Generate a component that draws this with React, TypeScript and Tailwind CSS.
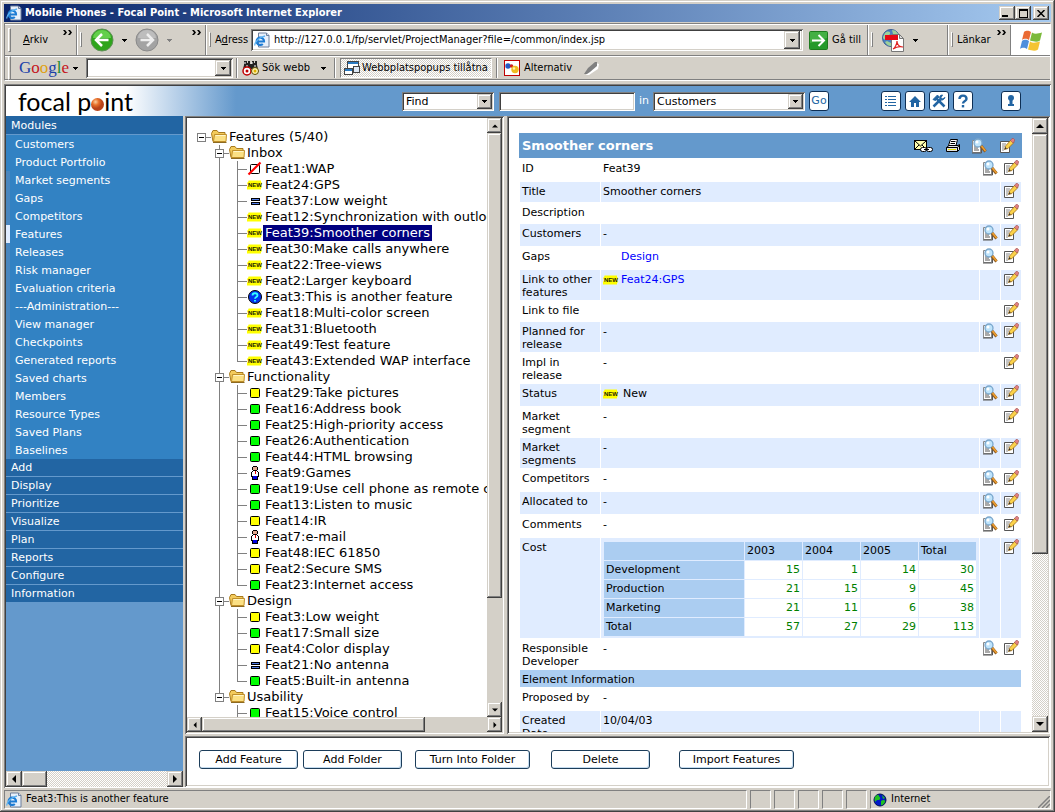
import React, { useState } from 'react';

const RAISED =
  'bg-[#d4d0c8] shadow-[inset_-1px_-1px_0_#404040,inset_1px_1px_0_#d4d0c8,inset_-2px_-2px_0_#808080,inset_2px_2px_0_#ffffff]';
const SUNKEN =
  'shadow-[inset_1px_1px_0_#808080,inset_-1px_-1px_0_#ffffff,inset_2px_2px_0_#404040,inset_-2px_-2px_0_#d4d0c8]';
const CHECKER = 'bg-[repeating-conic-gradient(#ffffff_0_25%,#d4d0c8_0_50%)] bg-[length:2px_2px]';
const TAHOMA = "font-['DejaVu_Sans_Condensed','DejaVu_Sans',sans-serif]";
const VERDANA = "font-['DejaVu_Sans',Verdana,sans-serif]";

type Kind = 'new' | 'yellow' | 'green' | 'equal' | 'person' | 'question' | 'rejected';
type Leaf = { kind: Kind; label: string };

const TREE: { name: string; items: Leaf[] }[] = [
  {
    name: 'Inbox',
    items: [
      { kind: 'rejected', label: 'Feat1:WAP' },
      { kind: 'new', label: 'Feat24:GPS' },
      { kind: 'equal', label: 'Feat37:Low weight' },
      { kind: 'new', label: 'Feat12:Synchronization with outlook' },
      { kind: 'new', label: 'Feat39:Smoother corners' },
      { kind: 'new', label: 'Feat30:Make calls anywhere' },
      { kind: 'new', label: 'Feat22:Tree-views' },
      { kind: 'new', label: 'Feat2:Larger keyboard' },
      { kind: 'question', label: 'Feat3:This is another feature' },
      { kind: 'new', label: 'Feat18:Multi-color screen' },
      { kind: 'new', label: 'Feat31:Bluetooth' },
      { kind: 'new', label: 'Feat49:Test feature' },
      { kind: 'new', label: 'Feat43:Extended WAP interface' },
    ],
  },
  {
    name: 'Functionality',
    items: [
      { kind: 'yellow', label: 'Feat29:Take pictures' },
      { kind: 'green', label: 'Feat16:Address book' },
      { kind: 'green', label: 'Feat25:High-priority access' },
      { kind: 'green', label: 'Feat26:Authentication' },
      { kind: 'green', label: 'Feat44:HTML browsing' },
      { kind: 'person', label: 'Feat9:Games' },
      { kind: 'green', label: 'Feat19:Use cell phone as remote control' },
      { kind: 'green', label: 'Feat13:Listen to music' },
      { kind: 'yellow', label: 'Feat14:IR' },
      { kind: 'person', label: 'Feat7:e-mail' },
      { kind: 'yellow', label: 'Feat48:IEC 61850' },
      { kind: 'yellow', label: 'Feat2:Secure SMS' },
      { kind: 'green', label: 'Feat23:Internet access' },
    ],
  },
  {
    name: 'Design',
    items: [
      { kind: 'yellow', label: 'Feat3:Low weight' },
      { kind: 'green', label: 'Feat17:Small size' },
      { kind: 'yellow', label: 'Feat4:Color display' },
      { kind: 'equal', label: 'Feat21:No antenna' },
      { kind: 'green', label: 'Feat5:Built-in antenna' },
    ],
  },
  {
    name: 'Usability',
    items: [
      { kind: 'green', label: 'Feat15:Voice control' },
    ],
  },
];

const MODULES = [
  'Customers', 'Product Portfolio', 'Market segments', 'Gaps', 'Competitors', 'Features', 'Releases',
  'Risk manager', 'Evaluation criteria', '---Administration---', 'View manager', 'Checkpoints',
  'Generated reports', 'Saved charts', 'Members', 'Resource Types', 'Saved Plans', 'Baselines',
];
const SECTIONS = ['Add', 'Display', 'Prioritize', 'Visualize', 'Plan', 'Reports', 'Configure', 'Information'];

const COST_YEARS = ['2003', '2004', '2005', 'Total'];
const COSTS: [string, number[]][] = [
  ['Development', [15, 1, 14, 30]],
  ['Production', [21, 15, 9, 45]],
  ['Marketing', [21, 11, 6, 38]],
  ['Total', [57, 27, 29, 113]],
];

/* ---------- icons ---------- */

const IeIcon = () => (
  <svg width="16" height="16" viewBox="0 0 16 16" className="shrink-0">
    <path d="M4.500 1h8l2.500 2.500V15H4.500z" fill="#e8f0fb" stroke="#6d7f9c" />
    <path d="M12.500 1v2.500H15" fill="#cfdcf0" stroke="#6d7f9c" />
    <path d="M3 9.500h7a3.700 3.700 0 1 0-1.200 2.500" fill="none" stroke="#1c7bd4" strokeWidth="2.200" />
    <path d="M1 13.500C0 11 5 5 11 4" fill="none" stroke="#5cb2f0" strokeWidth="1.300" />
  </svg>
);

const NavArrow = ({ back }: { back?: boolean }) => (
  <svg width="24" height="24" viewBox="0 0 24 24" className="shrink-0">
    <circle cx="12" cy="12" r="11" fill={back ? '#2fa51c' : '#a3a3a3'} stroke={back ? '#5f8f57' : '#8a8a8a'} />
    <path d="M3 10a9 8 0 0 1 18 0z" fill={back ? '#63cf4b' : '#bdbdbd'} />
    {back ? (
      <path d="M18.500 12H7m5-6-6 6 6 6" fill="none" stroke="#fff" strokeWidth="2.500" />
    ) : (
      <path d="M5.500 12H17m-5-6 6 6-6 6" fill="none" stroke="#eee" strokeWidth="2.500" />
    )}
  </svg>
);

const Caret = ({ className = 'text-black' }: { className?: string }) => (
  <svg width="5" height="3" viewBox="0 0 5 3" shapeRendering="crispEdges" className={`shrink-0 ${className}`}>
    <path d="M0 0h5v1H4v1H3v1H2V2H1V1H0z" fill="currentColor" />
  </svg>
);

const Chevrons = () => (
  <svg width="9" height="5" viewBox="0 0 9 5" className="shrink-0">
    <path d="M0 0h2l2 2.500L2 5H0l2-2.500zM5 0h2l2 2.500L7 5H5l2-2.500z" fill="#000" />
  </svg>
);

const GoIcon = () => (
  <svg width="19" height="19" viewBox="0 0 19 19" className="shrink-0">
    <rect x=".5" y=".5" width="18" height="18" rx="1" fill="#259a2b" stroke="#1e7b1e" />
    <path d="M1 1h17v6L1 12z" fill="#5abf55" opacity=".6" />
    <path d="M3 9.500h11M9.500 4l5.500 5.500L9.500 15" fill="none" stroke="#fff" strokeWidth="2" />
  </svg>
);

const PdfIcon = () => (
  <svg width="24" height="24" viewBox="0 0 24 24" className="shrink-0">
    <circle cx="10" cy="10" r="8.500" fill="#4a7fc1" stroke="#3b5f92" />
    <path d="M4 5c3-3 6-1 5 1s-3 1-4 4-3 1-3-1zM11 2c4 0 6 3 7 6l-3 1-3-3zM6 13l4 2v3c-3 0-5-2-6-4z" fill="#9ed09a" />
    <path d="M10.500 6.500h8l4 4v13h-12z" fill="#fff" stroke="#777" />
    <path d="M18.500 6.500v4h4z" fill="#ddd" stroke="#777" />
    <rect x="4" y="7" width="13" height="5" fill="#e50914" />
    <path d="M12 21c2-1 4-5 4-8 0 4 3 6 6 6-3-1-7 0-10 2z" fill="none" stroke="#e02020" strokeWidth="1.200" />
  </svg>
);

const WindowsLogo = () => (
  <svg width="24" height="23" viewBox="0 0 24 23">
    <path d="M5 3c3-2 5-1 7 0l-2 8c-2-1-4-2-7 0z" fill="#ea6a33" />
    <path d="M13 3.500c3 2 6 1 10 0l-2 8c-3 2-6 1-10 0z" fill="#7cba3c" />
    <path d="M3 12c3-2 5-1 7 0l-2 8c-2-1-4-2-7 0z" fill="#4f8fdc" />
    <path d="M11 12.500c3 2 6 1 10 0l-2 8c-3 2-6 1-10 0z" fill="#f5c433" />
  </svg>
);

const Binoculars = () => (
  <svg width="17" height="16" viewBox="0 0 17 16" className="shrink-0">
    <path d="M2 1h3v2h1V1h2v3h2V1h2v2h1V1h2v4l1 4H1l1-4z" fill="#222" />
    <path d="M3 2v2M10 2v2M13 5v2M5 5v2" stroke="#fff" />
    <circle cx="5" cy="11" r="4" fill="#fff" stroke="#c00000" strokeWidth="1.500" />
    <circle cx="5" cy="11" r="1.500" fill="#c00000" />
    <circle cx="13" cy="11" r="3.500" fill="#fff6b0" stroke="#5c4a00" />
    <circle cx="13" cy="11" r="1.500" fill="#e0b000" />
  </svg>
);

const PopupIcon = () => (
  <svg width="16" height="16" viewBox="0 0 16 16" shapeRendering="crispEdges" className="shrink-0">
    <rect x="3.500" y="1.500" width="11" height="7" fill="#fff" stroke="#444" />
    <rect x="4" y="2" width="10" height="2" fill="#2a7ac0" />
    <rect x=".5" y="8.500" width="8" height="6" fill="#fff" stroke="#444" />
    <rect x="1" y="9" width="7" height="2" fill="#2a7ac0" />
    <rect x="9.500" y="6.500" width="6" height="6" fill="#dfe9f5" stroke="#444" />
  </svg>
);

const OptionsIcon = () => (
  <svg width="16" height="16" viewBox="0 0 16 16" className="shrink-0">
    <rect x=".5" y=".5" width="15" height="15" fill="#fff" stroke="#c00000" />
    <circle cx="4" cy="6" r="2.700" fill="#2459c4" />
    <circle cx="7.500" cy="6" r="1.800" fill="#d02020" />
    <circle cx="11" cy="9.500" r="3.700" fill="#f0bc20" />
    <circle cx="10" cy="8.500" r="1.200" fill="#fff3b0" />
  </svg>
);

const Highlighter = () => (
  <svg width="15" height="14" viewBox="0 0 15 14" className="shrink-0">
    <path d="M1 13h3l9-6 1-5-3-1L5 7z" fill="#fff" transform="translate(1 1)" />
    <path d="M0 13 4 7l7-6h2v4L6 11l-3 2z" fill="#808080" />
  </svg>
);

const FolderIcon = () => (
  <svg width="16" height="16" viewBox="0 0 16 16" className="shrink-0">
    <path d="M.500 4.500 2 1.500h4L7.500 3.500H14v9H2z" fill="#f3cb5c" stroke="#a87a1e" />
    <path d="M3.500 5.500h12l-.5 7H2.500z" fill="#fbe084" stroke="#c08f2a" />
    <path d="M4.500 6.500h10" stroke="#fff6c8" />
    <path d="M2 13.500h13.500" stroke="#8c6a22" />
  </svg>
);

const NewIcon = () => (
  <svg width="16" height="10" viewBox="0 0 16 10" className="shrink-0">
    <path
      d="M0 3 1 2 2 0l1 1 1-1 1 1 1-1 1 1 1-1 1 1 1-1 1 1 1-1 1 1 1-1 0 2 1 1-1 2 1 2-1 1v2l-1-1-1 1-1-1-1 1-1-1-1 1-1-1-1 1-1-1-1 1-1-1-1 1-1-1-1 1-1-2L0 7l1-2z"
      fill="#ffff00"
    />
    <text x="8" y="7" textAnchor="middle" fontSize="6" fontWeight="bold" fill="#222200" fontFamily="Liberation Sans, sans-serif">
      NEW
    </text>
  </svg>
);

const KindIcon = ({ kind }: { kind: Kind }) => {
  if (kind === 'new') return <NewIcon />;
  return (
    <svg width="16" height="16" viewBox="0 0 16 16" className="shrink-0">
      {(kind === 'yellow' || kind === 'green') && (
        <rect x="3.500" y="3.500" width="9" height="9" rx="1" fill={kind === 'green' ? '#00ff00' : '#ffff00'} stroke="#000" />
      )}
      {kind === 'equal' && (
        <g shapeRendering="crispEdges">
          <path d="M4 5h9v3H4zM4 9h9v3H4z" fill="#000" />
          <path d="M5 6h7v1H5zM5 10h7v1H5z" fill="#4f7be8" />
        </g>
      )}
      {kind === 'rejected' && (
        <>
          <rect x="3.500" y="3.500" width="9" height="9" rx="1" fill="#fff" stroke="#000" />
          <path d="M1.500 13.500 13.500 1.500" stroke="#ff0000" strokeWidth="2.200" />
        </>
      )}
      {kind === 'question' && (
        <>
          <circle cx="8" cy="8" r="6.500" fill="#0033ee" stroke="#000" />
          <path d="M5.500 6.500c0-3 5-3 5 0 0 1.500-2.500 1.500-2.500 3.200M8 11v1.500" fill="none" stroke="#33ffff" strokeWidth="1.800" />
        </>
      )}
      {kind === 'person' && (
        <g shapeRendering="crispEdges">
          <path d="M6 1h4v1h1v3h-1v1h1v1h1v5h-1v3H5v-3H4V7h1V6h1V5H5V2h1z" fill="#000" />
          <path d="M6 2h4v3H6z" fill="#e0a890" />
          <path d="M6 6h4v1h1v4H5V7h1z" fill="#fff" />
          <path d="M8 6h1v3H8z" fill="#e00000" />
          <path d="M6 11h4v3H6z" fill="#0000e0" />
        </g>
      )}
    </svg>
  );
};

const LookupIcon = () => (
  <svg width="16" height="16" viewBox="0 0 16 16">
    <path d="M1.500 2.500h8v12h-8z" fill="#fff" stroke="#8a8a8a" />
    <path d="M1 15h9.500V10M3 8h2M3 10h4M3 12h5" fill="none" stroke="#555" />
    <circle cx="7" cy="5" r="4" fill="#bfe4fb" stroke="#7aa7cc" strokeWidth="1.300" />
    <circle cx="6" cy="4" r="1.500" fill="#fff" />
    <path d="m10 8 4.500 5.500" stroke="#8d5a20" strokeWidth="3" />
    <path d="m10.500 8 4 5" stroke="#f0a030" strokeWidth="1.600" />
  </svg>
);

const EditIcon = () => (
  <svg width="16" height="16" viewBox="0 0 16 16">
    <path d="M1.500 3.500h9v11h-9z" fill="#fff" stroke="#555" />
    <path d="M3 6h4M3 8h3M3 10h2M3 12h2" stroke="#888" />
    <path d="M5.500 11.500 6.500 8l5.500-6 3 2.500L9 10.500z" fill="#fbd24a" stroke="#9c6a1c" strokeWidth=".8" />
    <path d="m5.500 11.500.8-2.500 1.500 1.500z" fill="#333" />
    <path d="m11.500 2.500 1.500-2h1.500l1 1v1.500l-1.500 2z" fill="#e08080" stroke="#a05050" strokeWidth=".6" />
  </svg>
);

const MailIcon = () => (
  <svg width="20" height="16" viewBox="0 0 20 16">
    <rect x="1.500" y="2.500" width="12" height="9" fill="#ffffb0" stroke="#000" />
    <path d="m2 3 5.500 5L13 3M2 11l4-4M13 11 9 7" fill="none" stroke="#000" />
    <rect x="7.500" y="9.500" width="6" height="4" rx="2" fill="#fff" stroke="#000" />
    <rect x="13.500" y="9.500" width="6" height="4" rx="2" fill="#fff" stroke="#000" />
    <path d="M11 11.500h5" stroke="#000" />
  </svg>
);

const PrinterIcon = () => (
  <svg width="16" height="16" viewBox="0 0 16 16">
    <path d="M5.500 1.500h7l-1.500 6H3.500z" fill="#fff" stroke="#000" />
    <path d="M6 3.500h4.500M5.500 5.500H10" stroke="#000" />
    <path d="M1.500 9.500 4 7.500h9l1.500-1v5l-2 2h-11z" fill="#e4e4e4" stroke="#000" />
    <path d="M1.500 9.500h11l2-2.500M12.500 9.500v4" fill="none" stroke="#000" />
    <path d="M3 11.500h8" stroke="#e8e000" />
  </svg>
);

const GlobeIcon = () => (
  <svg width="14" height="14" viewBox="0 0 14 14" className="shrink-0">
    <circle cx="7" cy="7" r="6" fill="#0018c8" stroke="#001050" />
    <path d="M2 4c2-3 4-2 4-1s2 1 1 3-3 0-4 2-2-2-1-4zM8 8c2-2 5-1 4 1s-3 4-4 3zM9 2l3 3-2 1z" fill="#20c020" />
  </svg>
);

/* ---------- window widgets ---------- */

type Dir = 'up' | 'down' | 'left' | 'right';
const ARROWS: Record<Dir, string> = {
  up: 'M4 2 8 6H0z',
  down: 'M0 2h8L4 6z',
  left: 'M2 4 6 0v8z',
  right: 'M6 4 2 0v8z',
};

const ScrollButton = ({ dir, small }: { dir: Dir; small?: boolean }) => (
  <button
    aria-label={`Scroll ${dir}`}
    className={`flex shrink-0 items-center justify-center ${small ? 'h-[15px] w-[15px]' : 'h-4 w-4'} ${RAISED}`}
  >
    <svg width={small ? 6 : 8} height={small ? 6 : 8} viewBox="0 0 8 8">
      <path d={ARROWS[dir]} fill="#000" />
    </svg>
  </button>
);

const Grip = () => <span className="h-6 w-[3px] shrink-0 border border-t-white border-l-white border-r-[#808080] border-b-[#808080]" />;
const Divider = () => <span className="w-0.5 shrink-0 self-stretch border-r border-l border-r-white border-l-[#808080]" />;

type PickerProps = { label: string; options: string[]; className: string };
const Picker = ({ label, options, className }: PickerProps) => (
  <span className={`grid h-[19px] items-center bg-white p-0.5 ${SUNKEN} ${className}`}>
    <select aria-label={label} className="col-start-1 row-start-1 w-full appearance-none bg-transparent pl-0.5 text-[11px] leading-[15px] outline-none">
      {options.map((o) => (
        <option key={o}>{o}</option>
      ))}
    </select>
    <span className={`pointer-events-none col-start-1 row-start-1 flex h-[15px] w-[15px] items-center justify-center justify-self-end ${RAISED}`}>
      <Caret />
    </span>
  </span>
);

const HeaderButton = ({ label, children }: { label: string; children: React.ReactNode }) => (
  <button aria-label={label} className="flex h-5 w-5 items-center justify-center rounded-[3px] border border-[#0d2f55] bg-white text-[11px] text-[#2265a3]">
    {children}
  </button>
);

/* ---------- browser chrome ---------- */

const TitleBar = () => (
  <div className={`flex h-[18px] shrink-0 items-center gap-[3px] bg-linear-to-r from-[#0a246a] to-[#a6caf0] px-0.5 text-[11px] font-bold text-white ${TAHOMA}`}>
    <IeIcon />
    <span className="grow whitespace-nowrap">Mobile Phones - Focal Point - Microsoft Internet Explorer</span>
    <span className="flex">
      <button aria-label="Minimize" className={`flex h-3.5 w-4 items-end justify-center pb-[3px] ${RAISED}`}>
        <span className="mr-1 h-0.5 w-1.5 bg-black" />
      </button>
      <button aria-label="Maximize" className={`flex h-3.5 w-4 items-center justify-center ${RAISED}`}>
        <span className="h-[9px] w-[9px] border border-t-2 border-black" />
      </button>
      <button aria-label="Close" className={`ml-0.5 flex h-3.5 w-4 items-center justify-center ${RAISED}`}>
        <svg width="8" height="7" viewBox="0 0 8 7">
          <path d="m.5 0 7 7m0-7-7 7" stroke="#000" strokeWidth="1.500" />
        </svg>
      </button>
    </span>
  </div>
);

const AddressRow = () => (
  <div className="flex h-8 items-center border-t border-b border-t-white border-b-[#808080] pl-[3px]">
    <Grip />
    <button className="ml-3 w-10 text-left">
      <u>A</u>rkiv
    </button>
    <span className="mr-1 mb-4"><Chevrons /></span>
    <Divider />
    <span className="ml-0.5"><Grip /></span>
    <button aria-label="Back" className="ml-2"><NavArrow back /></button>
    <span className="ml-2"><Caret /></span>
    <button aria-label="Forward" className="ml-2"><NavArrow /></button>
    <span className="ml-2"><Caret className="text-[#808080]" /></span>
    <span className="mr-1 mb-4 ml-5"><Chevrons /></span>
    <Divider />
    <span className="ml-0.5"><Grip /></span>
    <label htmlFor="address" className="ml-1 w-9">
      A<u>d</u>ress
    </label>
    <div className={`flex h-[22px] min-w-0 grow items-center gap-1 bg-white px-[3px] ${SUNKEN}`}>
      <IeIcon />
      <input id="address" className="min-w-0 grow outline-none" defaultValue="http://127.0.0.1/fp/servlet/ProjectManager?file=/common/index.jsp" />
      <button aria-label="Show addresses" className={`flex h-[18px] w-4 items-center justify-center ${RAISED}`}>
        <Caret />
      </button>
    </div>
    <button className="ml-1.5 flex w-[58px] items-center gap-1 whitespace-nowrap">
      <GoIcon />
      Gå till
    </button>
    <Divider />
    <span className="ml-0.5"><Grip /></span>
    <button aria-label="Adobe PDF" className="ml-2 flex w-[66px] items-center gap-2">
      <PdfIcon />
      <Caret />
    </button>
    <Divider />
    <span className="ml-0.5"><Grip /></span>
    <button className="ml-1 w-10 text-left">Länkar</button>
    <span className="mr-1 mb-4"><Chevrons /></span>
    <span className="flex w-10 items-center justify-center self-stretch border-l border-[#808080] bg-white">
      <WindowsLogo />
    </span>
  </div>
);

const GoogleRow = () => (
  <div className="flex h-6 items-center border-t border-b border-t-white border-b-[#808080] pl-[3px]">
    <Grip />
    <button className="ml-2 flex items-center gap-1 font-['Liberation_Serif',serif] text-[17px] leading-5">
      <span>
        <span className="text-[#1a3fa8]">G</span>
        <span className="text-[#c4141c]">o</span>
        <span className="text-[#e0a010]">o</span>
        <span className="text-[#1a3fa8]">g</span>
        <span className="text-[#1d8a2c]">l</span>
        <span className="text-[#c4141c]">e</span>
      </span>
      <Caret />
    </button>
    <div className={`ml-2 flex h-5 w-[147px] items-center bg-white p-0.5 ${SUNKEN}`}>
      <input aria-label="Google search" className="min-w-0 grow outline-none" />
      <button aria-label="Search history" className={`flex h-4 w-4 items-center justify-center ${RAISED}`}>
        <Caret />
      </button>
    </div>
    <span className="ml-[3px] flex h-5"><Divider /></span>
    <button className="ml-1 flex w-[84px] items-center gap-[3px] whitespace-nowrap">
      <Binoculars />
      <span className="grow text-left">Sök webb</span>
      <Caret />
    </button>
    <span className="mr-1 ml-2 flex h-5"><Divider /></span>
    <button className={`flex h-5 items-center gap-0.5 border border-t-[#808080] border-l-[#808080] border-r-white border-b-white px-[3px] whitespace-nowrap ${CHECKER}`}>
      <PopupIcon />
      Webbplatspopups tillåtna
    </button>
    <span className="mr-1.5 ml-1 flex h-5"><Divider /></span>
    <button className="flex items-center gap-1">
      <OptionsIcon />
      Alternativ
    </button>
    <button aria-label="Highlight" className="ml-3"><Highlighter /></button>
  </div>
);

const StatusBar = () => (
  <div className={`mt-0.5 flex h-[19px] shrink-0 items-stretch gap-[3px] text-[11px] ${TAHOMA}`}>
    <span className="flex grow items-center gap-1 border border-t-[#808080] border-l-[#808080] border-r-white border-b-white pl-px">
      <IeIcon />
      Feat3:This is another feature
    </span>
    {[0, 1, 2, 3, 4].map((i) => (
      <span key={i} className="w-[21px] border border-t-[#808080] border-l-[#808080] border-r-white border-b-white" />
    ))}
    <span className="flex w-[181px] items-center gap-1 border border-t-[#808080] border-l-[#808080] border-r-white border-b-white pl-0.5">
      <GlobeIcon />
      <span className="grow">Internet</span>
      <svg width="12" height="12" viewBox="0 0 12 12" className="self-end">
        <path d="M0 12 12 0M4 12l8-8M8 12l4-4" stroke="#808080" strokeWidth="1.500" />
      </svg>
    </span>
  </div>
);

/* ---------- application ---------- */

const AppHeader = () => (
  <header className="flex h-[30px] shrink-0 items-center bg-linear-to-r from-white from-[120px] to-[#6499cc] to-[230px]">
    <h1 className="flex w-[396px] items-baseline pl-3 font-['Lato',sans-serif] text-[25px] leading-7 text-black">
      focal p
      <svg width="13" height="13" viewBox="0 0 13 13">
        <defs>
          <radialGradient id="ball" cx="35%" cy="30%">
            <stop offset="0" stopColor="#fbd0a0" />
            <stop offset="0.500" stopColor="#e8702a" />
            <stop offset="1" stopColor="#b8431a" />
          </radialGradient>
        </defs>
        <circle cx="6.500" cy="6.500" r="6.500" fill="url(#ball)" />
      </svg>
      int
    </h1>
    <div className="flex items-center">
      <Picker label="Action" options={['Find']} className="w-[92px]" />
      <input aria-label="Search text" className={`ml-[5px] h-[19px] w-[136px] bg-white px-1 text-[11px] outline-none ${SUNKEN}`} />
      <span className="w-[18px] text-center text-[11px] text-white">in</span>
      <Picker label="Module" options={['Customers']} className="w-[152px]" />
      <span className="ml-1">
        <HeaderButton label="Go">Go</HeaderButton>
      </span>
    </div>
    <div className="ml-auto flex gap-1 pr-[29px]">
      <HeaderButton label="List">
        <svg width="12" height="12" viewBox="0 0 12 12" shapeRendering="crispEdges">
          <path d="M0 1.500h2m1 0h8M0 4.500h2m1 0h8M0 7.500h2m1 0h8M0 10.500h2m1 0h8" stroke="#2265a3" />
        </svg>
      </HeaderButton>
      <HeaderButton label="Home">
        <svg width="12" height="12" viewBox="0 0 12 12">
          <path d="M6 1 0 7h2v5h3V8h2v4h3V7h2z" fill="#2265a3" />
        </svg>
      </HeaderButton>
      <HeaderButton label="Tools">
        <svg width="14" height="14" viewBox="0 0 14 14" fill="none" stroke="#2265a3">
          <path d="m1.500 12.500 7-7" strokeWidth="2.500" />
          <path d="M13 3.500 10.500 5 9 3.500 10.500 1C8 1 7 3 8 5s4 1 5-1.500z" fill="#2265a3" />
          <path d="m5 5 7.500 7.500" strokeWidth="2.500" />
          <path d="M1 5.500 5.500 1 7 3 3.500 6.500z" fill="#2265a3" />
        </svg>
      </HeaderButton>
      <HeaderButton label="Help">
        <svg width="12" height="14" viewBox="0 0 12 14">
          <path d="M2.500 5c0-4.500 7-4.500 7 0C9.500 7 6 7 6 9.500" fill="none" stroke="#2265a3" strokeWidth="2.400" />
          <path d="M4.800 11h2.400v2.400H4.800z" fill="#2265a3" />
        </svg>
      </HeaderButton>
      <span className="ml-6">
        <HeaderButton label="Log in">
          <svg width="10" height="12" viewBox="0 0 10 12">
            <path d="M5 0a3 3 0 0 1 3 3c0 1.500-1 2-1.500 2.800V9H8v2H2V9h1.500V5.800C3 5 2 4.500 2 3a3 3 0 0 1 3-3z" fill="#2265a3" />
          </svg>
        </HeaderButton>
      </span>
    </div>
  </header>
);

const Sidebar = () => (
  <nav className="flex w-[177px] shrink-0 flex-col bg-[#6499cc] text-[11px] text-white">
    <div className="flex h-[19px] items-center border-b border-[#6499cc] bg-[#2265a3] pt-0.5 pl-[5px]">Modules</div>
    <ul>
      {MODULES.map((name, i) => (
        <li key={name} className="flex h-[18px] bg-[#3282c3]">
          <span className={`w-1 ${name === 'Features' ? 'bg-[#e0ecff]' : i > 1 ? 'bg-[#4a86be]' : ''}`} />
          <a href="#" className="flex grow items-center pt-0.5 pl-[5px]">{name}</a>
        </li>
      ))}
    </ul>
    <ul className="grow">
      {SECTIONS.map((name) => (
        <li key={name} className="border-b border-[#6499cc] bg-[#2265a3]">
          <a href="#" className="flex h-[17px] items-center pt-0.5 pl-[5px]">{name}</a>
        </li>
      ))}
    </ul>
    <div className={`flex h-4 ${CHECKER}`}>
      <ScrollButton dir="left" />
      <span className={`w-[25px] ${RAISED}`} />
      <span className="grow" />
      <ScrollButton dir="right" />
    </div>
  </nav>
);

const Expander = () => (
  <button aria-label="Collapse" className="flex h-[9px] w-[9px] shrink-0 items-center justify-center border border-[#808080] bg-white">
    <span className="h-px w-[5px] bg-black" />
  </button>
);

const FeatureTree = () => {
  const [selected, setSelected] = useState('Feat39:Smoother corners');

  return (
    <section className={`flex w-[319px] shrink-0 flex-col bg-white p-0.5 ${SUNKEN}`}>
      <div className="flex min-h-0 grow">
        <div className="min-w-0 grow overflow-hidden pt-[11px] text-[13px] whitespace-nowrap">
          <div className="flex h-4 items-center pl-2.5">
            <Expander />
            <span className="h-px w-[5px] bg-[#808080]" />
            <FolderIcon />
            <span className="pl-0.5">Features (5/40)</span>
          </div>
          {TREE.map((group, g) => (
            <div key={group.name}>
              <div className="flex h-4 items-center pl-7">
                <span className="flex h-4 w-[9px] flex-col items-center">
                  <span className="w-px grow bg-[#808080]" />
                  <Expander />
                  <span className={`w-px grow ${g < TREE.length - 1 ? 'bg-[#808080]' : ''}`} />
                </span>
                <span className="h-px w-[5px] bg-[#808080]" />
                <FolderIcon />
                <span className="pl-0.5">{group.name}</span>
              </div>
              {group.items.map((item, i) => (
                <div key={item.label} className="flex h-4 items-center pl-8">
                  <span className={`h-4 w-[18px] shrink-0 ${g < TREE.length - 1 ? 'border-l border-[#808080]' : ''}`} />
                  <span className="flex h-4 w-2.5 shrink-0 flex-col">
                    <span className="h-[9px] border-b border-l border-[#808080]" />
                    <span className={`grow ${i < group.items.length - 1 || group.name === 'Usability' ? 'border-l border-[#808080]' : ''}`} />
                  </span>
                  <KindIcon kind={item.kind} />
                  <button
                    onClick={() => setSelected(item.label)}
                    className={`h-4 px-0.5 leading-4 ${selected === item.label ? 'bg-[#000080] text-white' : ''}`}
                  >
                    {item.label}
                  </button>
                </div>
              ))}
            </div>
          ))}
        </div>
        <div className="flex w-[15px] shrink-0 flex-col bg-[#d4d0c8]">
          <ScrollButton dir="up" small />
          <span className={`h-[465px] ${RAISED}`} />
          <span className="grow" />
          <ScrollButton dir="down" small />
        </div>
      </div>
      <div className="flex h-[15px] shrink-0 bg-[#d4d0c8]">
        <ScrollButton dir="left" small />
        <span className={`w-[223px] ${RAISED}`} />
        <span className="grow" />
        <ScrollButton dir="right" small />
      </div>
    </section>
  );
};

type RowProps = { label: React.ReactNode; shade?: boolean; lookup?: boolean; edit?: boolean; children?: React.ReactNode };
const Row = ({ label, shade, lookup, edit = true, children }: RowProps) => {
  const bg = shade ? 'bg-[#e0ecff]' : 'bg-white';
  return (
    <tr className={lookup || !edit ? 'h-[22px]' : 'h-5'}>
      <th scope="row" className={`px-0.5 pt-[3px] pb-px text-left align-top font-normal ${bg}`}>{label}</th>
      <td className={`px-0.5 pt-[3px] align-top ${bg}`}>{children}</td>
      <td className={`px-0.5 pt-px align-top ${bg}`}>
        {lookup && <button aria-label={`Look up ${label}`} className="block"><LookupIcon /></button>}
      </td>
      <td className={`px-0.5 pt-px align-top ${bg}`}>
        {edit && <button aria-label={`Edit ${label}`} className="block"><EditIcon /></button>}
      </td>
    </tr>
  );
};

const CostTable = () => (
  <table className="w-full border-separate border-spacing-px leading-[14px]">
    <thead>
      <tr className="h-[18px] text-left">
        <td className="bg-[#abcdf1]" />
        {COST_YEARS.map((y) => (
          <th key={y} scope="col" className="w-[57px] bg-[#abcdf1] px-0.5 font-normal">{y}</th>
        ))}
      </tr>
    </thead>
    <tbody>
      {COSTS.map(([name, values]) => (
        <tr key={name} className="h-[18px]">
          <th scope="row" className="bg-[#abcdf1] px-0.5 text-left font-normal">{name}</th>
          {values.map((v, i) => (
            <td key={i} className="bg-white px-0.5 text-right text-[#008000]">{v}</td>
          ))}
        </tr>
      ))}
    </tbody>
  </table>
);

const Details = () => (
  <section className={`flex min-w-0 grow bg-white p-0.5 ${SUNKEN}`}>
    <div className="min-w-0 grow overflow-hidden pt-[15px] pr-2.5 pl-2.5">
      <div className="flex h-[25px] items-center bg-[#6499cc] px-[3px] text-[13px] font-bold text-white">
        <h2 className="grow">Smoother corners</h2>
        <button aria-label="Mail link" className="mr-3"><MailIcon /></button>
        <button aria-label="Print" className="mr-2.5"><PrinterIcon /></button>
        <button aria-label="Look up" className="mr-3"><LookupIcon /></button>
        <button aria-label="Edit" className="mr-1"><EditIcon /></button>
      </div>
      <table className="w-full table-fixed border-separate border-spacing-px text-[11px] leading-[13px]">
        <colgroup>
          <col className="w-20" />
          <col />
          <col className="w-5" />
          <col className="w-5" />
        </colgroup>
        <tbody>
          <Row label="ID" lookup>Feat39</Row>
          <Row label="Title" shade>Smoother corners</Row>
          <Row label="Description" />
          <Row label="Customers" shade lookup>-</Row>
          <Row label="Gaps" lookup><a href="#" className="pl-[18px] text-[#0000ff]">Design</a></Row>
          <Row label="Link to other features" shade>
            <a href="#" className="flex items-center gap-0.5 text-[#0000ff]"><NewIcon />Feat24:GPS</a>
          </Row>
          <Row label="Link to file" />
          <Row label="Planned for release" shade lookup>-</Row>
          <Row label="Impl in release">-</Row>
          <Row label="Status" shade lookup>
            <span className="flex items-center gap-1"><NewIcon />New</span>
          </Row>
          <Row label="Market segment">-</Row>
          <Row label="Market segments" shade lookup>-</Row>
          <Row label="Competitors" lookup>-</Row>
          <Row label="Allocated to" shade lookup>-</Row>
          <Row label="Comments" lookup>-</Row>
          <Row label="Cost" shade>
            <div className="pb-px"><CostTable /></div>
          </Row>
          <Row label="Responsible Developer" lookup>-</Row>
          <tr>
            <th colSpan={4} className="bg-[#abcdf1] px-0.5 pt-[3px] pb-px text-left font-normal">Element Information</th>
          </tr>
          <Row label="Proposed by" edit={false}>-</Row>
          <Row label={<>Created<br />Date</>} shade edit={false}>10/04/03</Row>
        </tbody>
      </table>
    </div>
    <div className={`flex w-4 shrink-0 flex-col ${CHECKER}`}>
      <ScrollButton dir="up" />
      <span className={`h-[420px] ${RAISED}`} />
      <span className="grow" />
      <ScrollButton dir="down" />
    </div>
  </section>
);

const ActionButton = ({ className, children }: { className: string; children: React.ReactNode }) => (
  <button className={`h-[19px] rounded-[3px] border border-[#1c3d5a] bg-white text-[11px] leading-4 shadow-[inset_-1px_-1px_0_#c4dcf0] ${className}`}>
    {children}
  </button>
);

const Actions = () => (
  <section className={`flex h-[51px] shrink-0 items-start bg-white pt-3.5 pl-3.5 ${SUNKEN}`}>
    <ActionButton className="w-[99px]">Add Feature</ActionButton>
    <ActionButton className="ml-[5px] w-[99px]">Add Folder</ActionButton>
    <ActionButton className="ml-[13px] w-[115px]">Turn Into Folder</ActionButton>
    <ActionButton className="ml-[21px] w-[99px]">Delete</ActionButton>
    <ActionButton className="ml-[29px] w-[115px]">Import Features</ActionButton>
  </section>
);

export default function App() {
  return (
    <div className={`flex h-screen flex-col bg-[#d4d0c8] px-1 pt-1 pb-[3px] text-black shadow-[inset_-1px_-1px_0_#404040,inset_1px_1px_0_#d4d0c8,inset_-2px_-2px_0_#808080,inset_2px_2px_0_#ffffff] ${VERDANA}`}>
      <TitleBar />
      <div className={`mt-px shrink-0 border border-t-[#808080] border-l-[#808080] border-r-white border-b-white text-[11px] ${TAHOMA}`}>
        <AddressRow />
        <GoogleRow />
      </div>
      <main className={`mt-[3px] flex min-h-0 grow flex-col pt-0.5 pr-px pb-px pl-0.5 ${SUNKEN}`}>
        <AppHeader />
        <div className="flex min-h-0 grow">
          <Sidebar />
          <div className="flex min-w-0 grow flex-col bg-[#d4d0c8] pl-0.5">
            <div className="flex min-h-0 grow gap-[3px]">
              <FeatureTree />
              <Details />
            </div>
            <div className="mt-0.5 shrink-0">
              <Actions />
            </div>
          </div>
        </div>
      </main>
      <StatusBar />
    </div>
  );
}
